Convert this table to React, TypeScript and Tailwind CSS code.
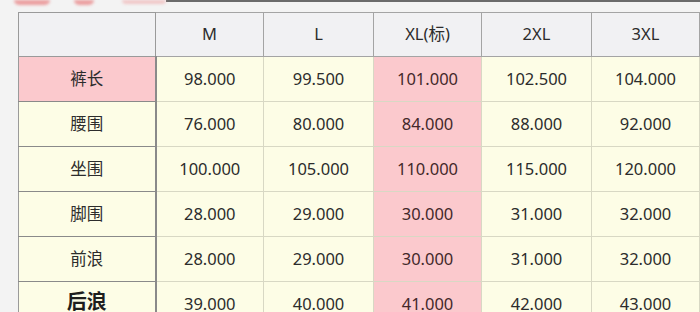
import React from "react";

const sizes = ["M", "L", "XL(标)", "2XL", "3XL"];

const rows: { name: string; values: string[]; bold?: boolean }[] = [
  { name: "裤长", values: ["98.000", "99.500", "101.000", "102.500", "104.000"] },
  { name: "腰围", values: ["76.000", "80.000", "84.000", "88.000", "92.000"] },
  { name: "坐围", values: ["100.000", "105.000", "110.000", "115.000", "120.000"] },
  { name: "脚围", values: ["28.000", "29.000", "30.000", "31.000", "32.000"] },
  { name: "前浪", values: ["28.000", "29.000", "30.000", "31.000", "32.000"] },
  { name: "后浪", values: ["39.000", "40.000", "41.000", "42.000", "43.000"], bold: true },
];

const widths = ["w-[108px]", "w-[110px]", "w-[108px]", "w-[110px]", "w-[108px]"];

export default function App() {
  return (
    <div
      className="w-[700px] h-[312px] overflow-hidden bg-[#f3f3f3] text-[#2c2c2c]"
      style={{ fontFamily: '"Noto Sans", "Noto Sans CJK SC", sans-serif' }}
    >
      {/* cut-off title strip */}
      <div className="flex items-start h-[12px] overflow-hidden pl-[14px]">
        <div className="w-[36px] h-[5px] rounded-b-full bg-[#e8797b] blur-[1.5px] opacity-70" />
        <div className="ml-[24px] w-[20px] h-[5px] rounded-b-full bg-[#e8797b] blur-[1.5px] opacity-70" />
        <div className="ml-[28px] w-[44px] h-[4px] rounded-b-full bg-[#ee9a9b] blur-[1.5px] opacity-50" />
        <div className="flex-1 h-[2px] bg-[#6b6b6b]" />
      </div>

      <div className="pl-[18px]">
        <table className="border-collapse text-[16.5px] leading-none">
          <thead>
            <tr className="h-[44px] bg-[#f1f1f3]">
              <th className="w-[137px] border border-[#9a9a9a]" />
              {sizes.map((s, i) => (
                <th
                  key={s}
                  className={`${widths[i]} border border-[#a4a4a4] font-normal`}
                >
                  {s}
                </th>
              ))}
            </tr>
          </thead>
          <tbody>
            {rows.map((r, ri) => (
              <tr key={r.name} className="h-[45px]">
                <td
                  className={`border border-l-[#9a9a9a] border-y-[#8a8a8a] border-r-2 border-r-[#8a8a8a] text-center ${
                    ri === 0 ? "bg-[#fbc9cd]" : "bg-[#fdfde6]"
                  } ${r.bold ? "font-bold text-[20px] text-[#1e1e1e] align-top pt-[10px]" : ""}`}
                >
                  {r.name}
                </td>
                {r.values.map((v, i) => (
                  <td
                    key={i}
                    className={`border border-[#d8d8c4] text-center ${
                      i === 2 ? "bg-[#fbc9cd] text-[#43282a]" : "bg-[#fdfde6]"
                    }`}
                  >
                    {v}
                  </td>
                ))}
              </tr>
            ))}
          </tbody>
        </table>
      </div>
    </div>
  );
}
